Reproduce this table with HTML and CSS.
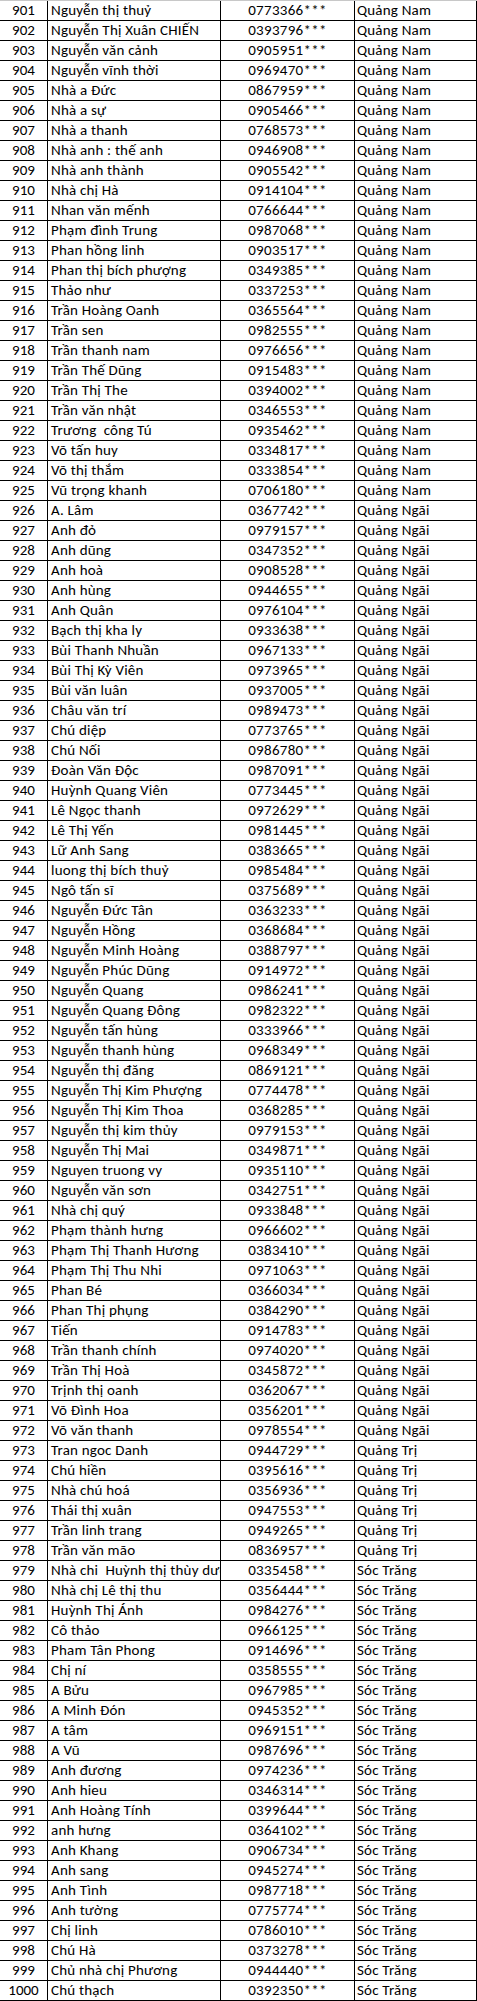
FILE: index.html
```html
<!DOCTYPE html>
<html lang="vi">
<head>
<meta charset="utf-8">
<title>Danh sách</title>
<link rel="stylesheet" href="styles.css">
</head>
<body>
<div class="sheet" id="sheet"></div>
<script src="app.js"></script>
</body>
</html>
```
FILE: styles.css
```css
html, body {
  margin: 0;
  padding: 0;
  background: #ffffff;
}
.sheet {
  width: 477px;
  border-top: 1px solid #c8c8c8;
  font-family: Carlito, Calibri, "Liberation Sans", Arial, sans-serif;
  font-size: 15px;
  color: #000;
}
.row {
  display: grid;
  grid-template-columns: 48px 173px 134px 122px;
  height: 20px;
  box-sizing: border-box;
  border-bottom: 1px solid #000;
}
.cell {
  line-height: 19px;
  white-space: nowrap;
  overflow: hidden;
  border-right: 1px solid #000;
}
.num { text-align: center; }
.name { padding-left: 3px; letter-spacing: 0.2px; }
.phone { text-align: center; letter-spacing: 0.3px; }
.prov { padding-left: 2px; letter-spacing: 0.2px; }
```
FILE: app.js
```js
const data = [
["Nguyễn thị thuỷ","0773366","Quảng Nam"],
["Nguyễn Thị Xuân CHIẾN","0393796","Quảng Nam"],
["Nguyễn văn cảnh","0905951","Quảng Nam"],
["Nguyễn vĩnh thời","0969470","Quảng Nam"],
["Nhà a Đức","0867959","Quảng Nam"],
["Nhà a sự","0905466","Quảng Nam"],
["Nhà a thanh","0768573","Quảng Nam"],
["Nhà anh : thế anh","0946908","Quảng Nam"],
["Nhà anh thành","0905542","Quảng Nam"],
["Nhà chị Hà","0914104","Quảng Nam"],
["Nhan văn mếnh","0766644","Quảng Nam"],
["Phạm đình Trung","0987068","Quảng Nam"],
["Phan hồng linh","0903517","Quảng Nam"],
["Phan thị bích phượng","0349385","Quảng Nam"],
["Thảo như","0337253","Quảng Nam"],
["Trần Hoàng Oanh","0365564","Quảng Nam"],
["Trần sen","0982555","Quảng Nam"],
["Trần thanh nam","0976656","Quảng Nam"],
["Trần Thế Dũng","0915483","Quảng Nam"],
["Trần Thị The","0394002","Quảng Nam"],
["Trần văn nhật","0346553","Quảng Nam"],
["Trương\u00a0 công Tú","0935462","Quảng Nam"],
["Võ tấn huy","0334817","Quảng Nam"],
["Võ thị thắm","0333854","Quảng Nam"],
["Vũ trọng khanh","0706180","Quảng Nam"],
["A. Lâm","0367742","Quảng Ngãi"],
["Anh đỏ","0979157","Quảng Ngãi"],
["Anh dũng","0347352","Quảng Ngãi"],
["Anh hoà","0908528","Quảng Ngãi"],
["Anh hùng","0944655","Quảng Ngãi"],
["Anh Quân","0976104","Quảng Ngãi"],
["Bạch thị kha ly","0933638","Quảng Ngãi"],
["Bùi Thanh Nhuần","0967133","Quảng Ngãi"],
["Bùi Thị Kỳ Viên","0973965","Quảng Ngãi"],
["Bùi văn luân","0937005","Quảng Ngãi"],
["Châu văn trí","0989473","Quảng Ngãi"],
["Chú diệp","0773765","Quảng Ngãi"],
["Chú Nối","0986780","Quảng Ngãi"],
["Đoàn Văn Độc","0987091","Quảng Ngãi"],
["Huỳnh Quang Viên","0773445","Quảng Ngãi"],
["Lê Ngọc thanh","0972629","Quảng Ngãi"],
["Lê Thị Yến","0981445","Quảng Ngãi"],
["Lữ Anh Sang","0383665","Quảng Ngãi"],
["luong thị bích thuỷ","0985484","Quảng Ngãi"],
["Ngô tấn sĩ","0375689","Quảng Ngãi"],
["Nguyễn Đức Tân","0363233","Quảng Ngãi"],
["Nguyễn Hồng","0368684","Quảng Ngãi"],
["Nguyễn Minh Hoàng","0388797","Quảng Ngãi"],
["Nguyễn Phúc Dũng","0914972","Quảng Ngãi"],
["Nguyễn Quang","0986241","Quảng Ngãi"],
["Nguyễn Quang Đông","0982322","Quảng Ngãi"],
["Nguyễn tấn hùng","0333966","Quảng Ngãi"],
["Nguyễn thanh hùng","0968349","Quảng Ngãi"],
["Nguyễn thị đăng","0869121","Quảng Ngãi"],
["Nguyễn Thị Kim Phượng","0774478","Quảng Ngãi"],
["Nguyễn Thị Kim Thoa","0368285","Quảng Ngãi"],
["Nguyễn thị kim thủy","0979153","Quảng Ngãi"],
["Nguyễn Thị Mai","0349871","Quảng Ngãi"],
["Nguyen truong vy","0935110","Quảng Ngãi"],
["Nguyễn văn sơn","0342751","Quảng Ngãi"],
["Nhà chị quý","0933848","Quảng Ngãi"],
["Phạm thành hưng","0966602","Quảng Ngãi"],
["Phạm Thị Thanh Hương","0383410","Quảng Ngãi"],
["Phạm Thị Thu Nhi","0971063","Quảng Ngãi"],
["Phan Bé","0366034","Quảng Ngãi"],
["Phan Thị phụng","0384290","Quảng Ngãi"],
["Tiến","0914783","Quảng Ngãi"],
["Trần thanh chính","0974020","Quảng Ngãi"],
["Trần Thị Hoà","0345872","Quảng Ngãi"],
["Trịnh thị oanh","0362067","Quảng Ngãi"],
["Võ Đình Hoa","0356201","Quảng Ngãi"],
["Võ văn thanh","0978554","Quảng Ngãi"],
["Tran ngoc Danh","0944729","Quảng Trị"],
["Chú hiền","0395616","Quảng Trị"],
["Nhà chú hoá","0356936","Quảng Trị"],
["Thái thị xuân","0947553","Quảng Trị"],
["Trần linh trang","0949265","Quảng Trị"],
["Trần văn mão","0836957","Quảng Trị"],
["Nhà chi\u00a0 Huỳnh thị thùy dương","0335458","Sóc Trăng"],
["Nhà chị Lê thị thu","0356444","Sóc Trăng"],
["Huỳnh Thị Ánh","0984276","Sóc Trăng"],
["Cô thảo","0966125","Sóc Trăng"],
["Pham Tân Phong","0914696","Sóc Trăng"],
["Chị ní","0358555","Sóc Trăng"],
["A Bửu","0967985","Sóc Trăng"],
["A Minh Đón","0945352","Sóc Trăng"],
["A tâm","0969151","Sóc Trăng"],
["A Vũ","0987696","Sóc Trăng"],
["Anh đương","0974236","Sóc Trăng"],
["Anh hieu","0346314","Sóc Trăng"],
["Anh Hoàng Tính","0399644","Sóc Trăng"],
["anh hưng","0364102","Sóc Trăng"],
["Anh Khang","0906734","Sóc Trăng"],
["Anh sang","0945274","Sóc Trăng"],
["Anh Tình","0987718","Sóc Trăng"],
["Anh tường","0775774","Sóc Trăng"],
["Chị linh","0786010","Sóc Trăng"],
["Chú Hà","0373278","Sóc Trăng"],
["Chủ nhà chị Phương","0944440","Sóc Trăng"],
["Chú thạch","0392350","Sóc Trăng"]
];
const sheet = document.getElementById('sheet');
data.forEach((r, i) => {
  const row = document.createElement('div');
  row.className = 'row';
  const cells = [[String(901 + i), 'num'], [r[0], 'name'], [r[1] + '***', 'phone'], [r[2], 'prov']];
  cells.forEach(([t, c]) => {
    const d = document.createElement('div');
    d.className = 'cell ' + c;
    d.textContent = t;
    row.appendChild(d);
  });
  sheet.appendChild(row);
});
```
